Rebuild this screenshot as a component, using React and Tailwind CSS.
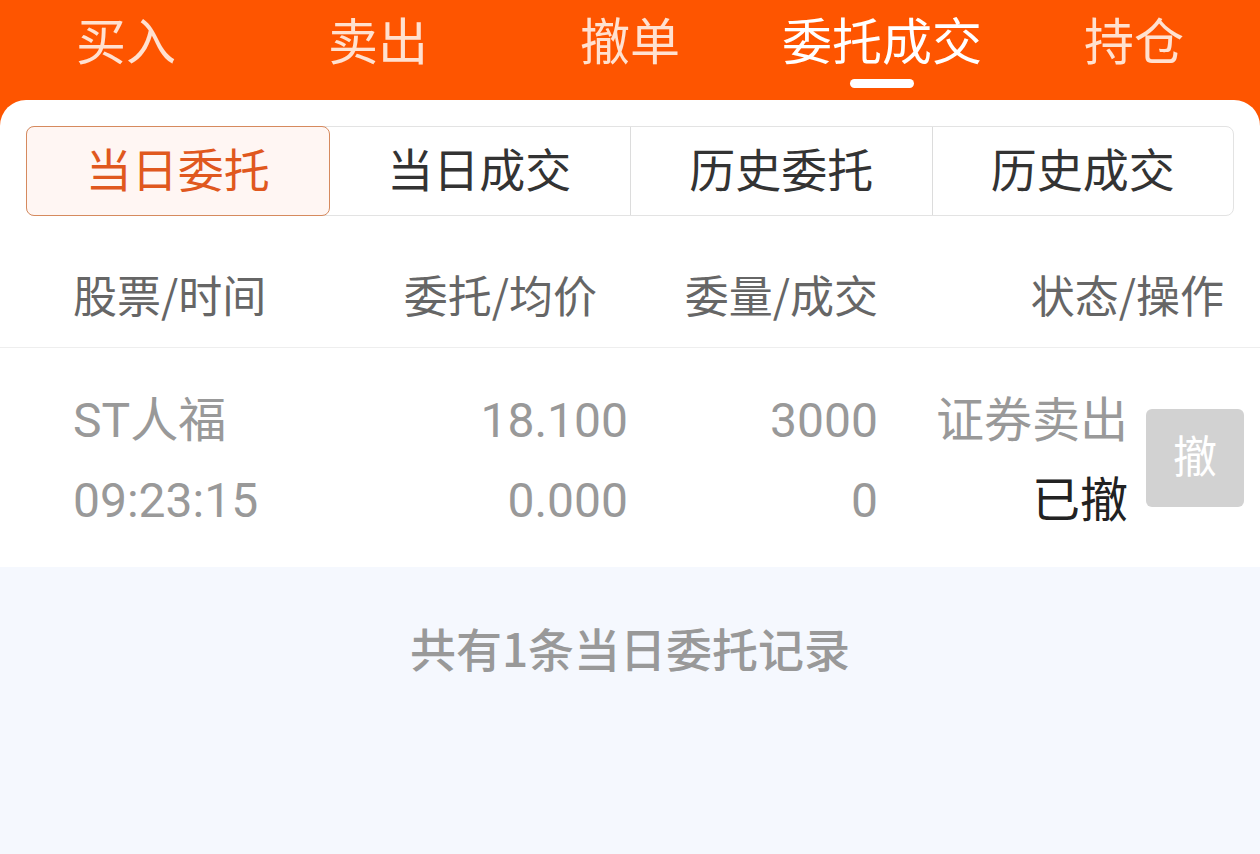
const font = { fontFamily: '"Noto Sans CJK SC", "Noto Sans", sans-serif' };
const numFont = { fontFamily: 'Roboto, "Noto Sans CJK SC", sans-serif' };

const topTabs = ["买入", "卖出", "撤单", "委托成交", "持仓"];
const segs = ["当日委托", "当日成交", "历史委托", "历史成交"];

export default function App() {
  return (
    <div className="flex flex-col h-[854px] bg-[#fe5500] overflow-hidden" style={font}>
      <div className="grid grid-cols-5 h-[100px] shrink-0">
        {topTabs.map((t, i) => (
          <div key={t} className="relative flex justify-center">
            <span
              className={
                "block text-[50px] leading-[76px] " +
                (i === 3 ? "text-white" : "text-[#ffe1d0]")
              }
            >
              {t}
            </span>
            {i === 3 && (
              <div className="absolute left-1/2 -translate-x-1/2 top-[79px] w-[64px] h-[9px] rounded-full bg-white" />
            )}
          </div>
        ))}
      </div>

      <div className="flex flex-col flex-1 bg-white rounded-t-[26px]">
        <div className="px-[26px] pt-[26px]">
          <div className="grid grid-cols-4 h-[90px] border border-[#e3e3e3] rounded-[8px]">
            {segs.map((s, i) => (
              <div
                key={s}
                className={
                  "flex items-center justify-center pb-[8px] text-[46px] " +
                  (i === 0
                    ? "bg-[#fff6f3] text-[#e0581e] border border-[#d68a5e] rounded-[8px] -m-px"
                    : "text-[#333333] " + (i > 1 ? "border-l border-[#dcdcdc]" : ""))
                }
              >
                {s}
              </div>
            ))}
          </div>
        </div>

        <div className="flex items-center h-[103px] mt-[29px] pb-[4px] pl-[73px] border-b border-[#eeeeee] text-[#666666] text-[44px]">
          <div className="w-[300px]">股票/时间</div>
          <div className="w-[224px] text-right">委托/均价</div>
          <div className="w-[281px] text-right">委量/成交</div>
          <div className="w-[346px] text-right">状态/操作</div>
        </div>

        <div className="flex items-center h-[219px] pt-[6px] pl-[73px] text-[48px]" style={numFont}>
          <div className="w-[300px] text-[#999999]">
            <div className="leading-[80px]">ST人福</div>
            <div className="leading-[80px]">09:23:15</div>
          </div>
          <div className="w-[255px] text-right text-[#999999]">
            <div className="leading-[80px]">18.100</div>
            <div className="leading-[80px]">0.000</div>
          </div>
          <div className="w-[250px] text-right text-[#999999]">
            <div className="leading-[80px]">3000</div>
            <div className="leading-[80px]">0</div>
          </div>
          <div className="w-[250px] text-right">
            <div className="leading-[80px] text-[#999999]">证券卖出</div>
            <div className="leading-[80px] text-[#222222]">已撤</div>
          </div>
          <div className="ml-[18px] -mt-[6px] flex items-center justify-center w-[98px] h-[98px] rounded-[6px] bg-[#d2d2d2] text-white text-[44px]">
            撤
          </div>
        </div>

        <div className="flex-1 bg-[#f5f8fe] flex justify-center">
          <div className="mt-[50px] text-[46px] leading-[60px] font-medium text-[#999999]">
            共有1条当日委托记录
          </div>
        </div>
      </div>
    </div>
  );
}
